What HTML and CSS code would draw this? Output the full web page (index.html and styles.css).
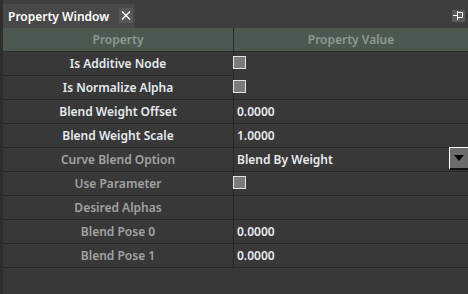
FILE: index.html
```html
<!DOCTYPE html>
<html lang="en">
<head>
    <meta charset="UTF-8">
    <title>Property Window</title>
    <link rel="stylesheet" href="styles.css">
</head>
<body>
    <div class="panel">
        <div class="tab-bar">
            <div class="tab">
                <span class="tab-title">Property Window</span>
                <span class="tab-close">
                    <svg width="14" height="15" viewBox="0 0 14 15"><path d="M3 3.5 L11 11.5 M11 3.5 L3 11.5" stroke="#fff" stroke-width="1.3" fill="none"/></svg>
                </span>
            </div>
            <span class="pin">
                <svg width="13" height="12" viewBox="0 0 13 12"><path d="M1 5.5 H5.5 M5.5 1 V10 M5.5 2.5 H10.5 V7.5 H5.5" stroke="#fff" stroke-width="1" fill="none"/></svg>
            </span>
        </div>

        <div class="grid">
            <div class="head">Property</div>
            <div class="head">Property Value</div>

            <div class="name">Is Additive Node</div>
            <div class="value plain"><span class="check"></span></div>

            <div class="name">Is Normalize Alpha</div>
            <div class="value"><span class="check"></span></div>

            <div class="name">Blend Weight Offset</div>
            <div class="value">0.0000</div>

            <div class="name">Blend Weight Scale</div>
            <div class="value">1.0000</div>

            <div class="name off">Curve Blend Option</div>
            <div class="value combo">Blend By Weight<span class="combo-btn"><svg width="10" height="6" viewBox="0 0 10 6"><path d="M0 0 H10 L5 6 Z" fill="#000"/></svg></span></div>

            <div class="name off">Use Parameter</div>
            <div class="value"><span class="check"></span></div>

            <div class="name off">Desired Alphas</div>
            <div class="value"></div>

            <div class="name off">Blend Pose 0</div>
            <div class="value">0.0000</div>

            <div class="name off">Blend Pose 1</div>
            <div class="value">0.0000</div>
        </div>
    </div>
</body>
</html>
```

FILE: styles.css
```css
body { margin: 0; background: #383838; font-family: "Noto Sans", sans-serif; font-size: 12px; font-weight: 600; }
.panel { height: 294px; border-left: 3px solid #2e2e2e; background: #383838; }

.tab-bar { display: flex; align-items: flex-end; height: 28px; background: #3e3e3e; position: relative; }
.tab { display: flex; align-items: center; width: 132px; height: 24px; background: #484848; }
.tab-title { color: #fff; white-space: nowrap; padding-left: 5px; flex: 1; }
.tab-close { display: flex; width: 14px; height: 15px; background: #585858; margin: -1px 2px 0 0; }
.pin { position: absolute; right: 3px; top: 10px; display: flex; width: 13px; height: 12px; background: #5a5a5a; }

.grid { display: grid; grid-template-columns: 231px 1fr; grid-auto-rows: 24px; }
.head { display: flex; align-items: center; justify-content: center; background: #4b5950; color: #8e9994; border-right: 1px solid #2a2a2a; border-bottom: 1px solid #2a2a2a; }
.head:nth-child(2) { border-right: none; }
.name { display: flex; align-items: center; justify-content: center; color: #e6ebf0; border-right: 1px solid #262626; border-bottom: 1px solid #262626; }
.name.off { color: #a3a3a3; }
.value { display: flex; align-items: center; padding-left: 3px; color: #e6ebf0; border-bottom: 1px solid #262626; position: relative; }
.value.plain { border-bottom: none; }
.check { align-self: flex-start; margin: 4px 0 0 -4px; width: 11px; height: 11px; background: #7a7a7a; border: 1px solid #e4e4e4; }
.combo-btn { position: absolute; right: 0; top: -1px; width: 19px; height: 23px; display: flex; align-items: center; justify-content: center; background: #6c6c6c; border-left: 1px solid #fff; border-top: 1px solid #fff; border-bottom: 2px solid #111; box-sizing: border-box; }
```
